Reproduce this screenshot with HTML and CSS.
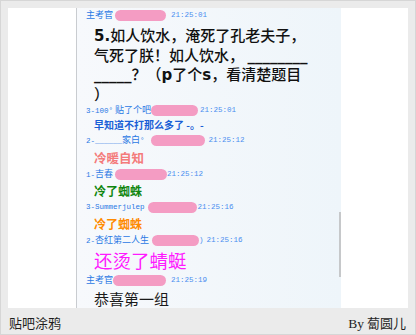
FILE: index.html
```html
<!DOCTYPE html>
<html lang="zh">
<head>
<meta charset="utf-8">
<title>贴吧涂鸦</title>
<link rel="stylesheet" href="styles.css">
</head>
<body>
<div class="frame">
  <div class="canvas">
    <div class="chat">
      <div class="meta"><span class="name">主考官</span><span class="blob g2" style="width:51px"></span><span class="time g5">21:25:01</span></div>
      <div class="msg big"><span class="lb">5.</span>如人饮水，淹死了孔老夫子，<br>气死了朕！如人饮水，&nbsp;<span class="lb">________</span><br><span class="lb">_____</span>？（<span class="lb">p</span>了个<span class="lb">s</span>，看清楚题目<br>）</div>

      <div class="meta"><span class="name"><span class="a">3-100°</span> 贴了个吧</span><span class="blob" style="width:47px"></span><span class="time g2">21:25:01</span></div>
      <div class="msg blue">早知道不打那么多了 -。-</div>

      <div class="meta"><span class="name"><span class="a">2-______</span>家白<span class="a">°</span></span><span class="blob g6" style="width:54px"></span><span class="time g4">21:25:12</span></div>
      <div class="msg warm">冷暖自知</div>

      <div class="meta"><span class="name"><span class="a">1-</span>吉春</span><span class="blob g2" style="width:52px"></span><span class="time">21:25:12</span></div>
      <div class="msg green">冷了蜘蛛</div>

      <div class="meta"><span class="name a">3-Summerjulep</span><span class="blob g3" style="width:49px"></span><span class="time g1">21:25:16</span></div>
      <div class="msg orange">冷了蜘蛛</div>

      <div class="meta"><span class="name"><span class="a">2-</span>杏红第二人生</span><span class="blob g3" style="width:47px"></span><span class="time a">)</span><span class="time g3">21:25:16</span></div>
      <div class="msg magenta">还烫了蜻蜓</div>

      <div class="meta"><span class="name">主考官</span><span class="blob" style="width:53px"></span><span class="time g5">21:25:19</span></div>
      <div class="msg black">恭喜第一组</div>

      <div class="scroll"></div>
    </div>
  </div>
  <div class="footer">
    <span class="title">贴吧涂鸦</span>
    <span class="by"><span class="by-en">By</span> 蔔圆儿</span>
  </div>
</div>
</body>
</html>
```

FILE: styles.css
```css
html, body {
  margin: 0;
  padding: 0;
}
body {
  width: 416px;
  height: 335px;
  overflow: hidden;
  font-family: "Noto Sans CJK SC", sans-serif;
}
.frame {
  box-sizing: border-box;
  width: 416px;
  height: 335px;
  border: 1px solid #d6d6d6;
  background: #ebebeb;
  padding: 7px 7px 0 7px;
}
.canvas {
  height: 300px;
  background: #ffffff;
  overflow: hidden;
}
.chat {
  position: relative;
  box-sizing: border-box;
  width: 265px;
  height: 300px;
  margin-left: 68px;
  border-left: 1px solid #c9ccd0;
  background: linear-gradient(to right, #f7f9fc, #eef5fa);
  padding-left: 9px;
}
.meta {
  display: flex;
  align-items: center;
  height: 14px;
  font-size: 9px;
  line-height: 14px;
  color: #2a78e4;
  white-space: nowrap;
}
.a {
  font-family: "Liberation Mono", monospace;
  font-size: 7.5px;
}
.blob {
  display: inline-block;
  height: 11px;
  border-radius: 6px;
  background: #f49cc3;
}
.time {
  font-family: "Liberation Mono", monospace;
  font-size: 7.5px;
  color: #4a8ef0;
}
.g1 { margin-left: 1px; }
.g2 { margin-left: 2px; }
.g3 { margin-left: 3px; }
.g4 { margin-left: 4px; }
.g5 { margin-left: 5px; }
.g6 { margin-left: 6px; }
.msg {
  padding-left: 8px;
  white-space: nowrap;
}
.big {
  font-family: "Noto Sans CJK SC", sans-serif;
  font-size: 15px;
  font-weight: 500;
  line-height: 18.5px;
  padding-top: 4px;
  color: #111111;
}
.lb {
  font-family: "DejaVu Sans", sans-serif;
  font-weight: 700;
}
.blue {
  font-size: 10px;
  font-weight: 700;
  line-height: 16px;
  color: #1a5fd6;
}
.warm {
  font-size: 12.5px;
  font-weight: 700;
  line-height: 18px;
  padding-top: 2px;
  color: #f47b7b;
}
.green {
  font-size: 12px;
  font-weight: 700;
  line-height: 19px;
  color: #0f860f;
}
.orange {
  font-size: 12px;
  font-weight: 700;
  line-height: 19px;
  color: #ff8a00;
}
.magenta {
  font-size: 18.5px;
  line-height: 26px;
  color: #ff1aff;
}
.black {
  font-size: 15px;
  line-height: 24px;
  color: #1a1a1a;
}
.scroll {
  position: absolute;
  right: 0;
  top: 204px;
  width: 2px;
  height: 65px;
  background: #c6c8ca;
}
.footer {
  display: flex;
  justify-content: space-between;
  align-items: center;
  height: 26px;
  padding: 2px 2px 0 1px;
  box-sizing: border-box;
  font-size: 13px;
  color: #1e1e1e;
}
.by-en {
  font-family: "Liberation Serif", serif;
  font-size: 13.5px;
}
```
